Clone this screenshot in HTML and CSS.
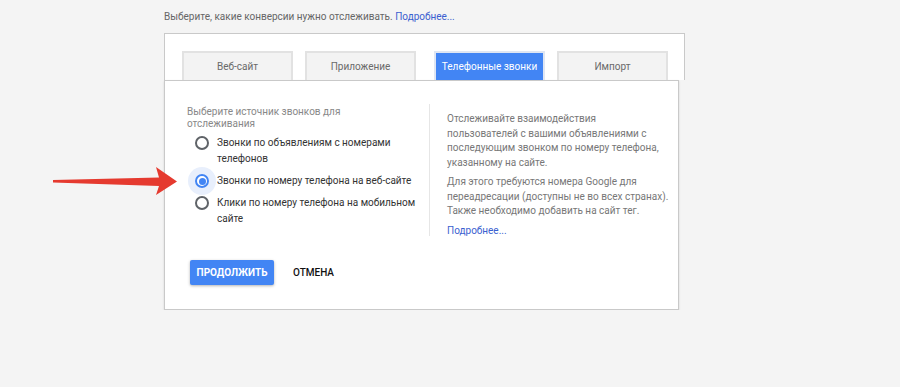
FILE: index.html
```html
<!DOCTYPE html>
<html lang="ru">
<head>
    <meta charset="UTF-8">
    <title>Конверсии</title>
    <link rel="stylesheet" href="styles.css">
</head>
<body>
    <div class="page">
        <p class="intro">Выберите, какие конверсии нужно отслеживать. <a href="#">Подробнее...</a></p>

        <div class="tabs-box">
            <div class="tab">Веб-сайт</div>
            <div class="tab">Приложение</div>
            <div class="tab active">Телефонные звонки</div>
            <div class="tab">Импорт</div>
        </div>

        <div class="panel">
            <div class="cols">
                <div class="left-col">
                    <div class="group-label">Выберите источник звонков для отслеживания</div>
                    <label class="radio-row">
                        <span class="radio"></span>
                        <span class="radio-text">Звонки по объявлениям с номерами телефонов</span>
                    </label>
                    <label class="radio-row">
                        <span class="radio checked"></span>
                        <span class="radio-text">Звонки по номеру телефона на веб-сайте</span>
                    </label>
                    <label class="radio-row">
                        <span class="radio"></span>
                        <span class="radio-text">Клики по номеру телефона на мобильном сайте</span>
                    </label>
                </div>
                <div class="right-col">
                    <p>Отслеживайте взаимодействия<br>пользователей с вашими объявлениями с последующим звонком по номеру телефона, указанному на сайте.</p>
                    <p>Для этого требуются номера Google для переадресации (доступны не во всех странах). Также необходимо добавить на сайт тег.</p>
                    <p><a href="#">Подробнее...</a></p>
                </div>
            </div>

            <div class="actions">
                <button class="btn-primary" type="button">Продолжить</button>
                <button class="btn-flat" type="button">Отмена</button>
            </div>
        </div>
    </div>

    <!-- annotation arrow drawn over the screenshot -->
    <svg class="arrow" width="900" height="387" viewBox="0 0 900 387">
        <polygon points="53,180 159,177.5 156,167 177,181.5 156,195 159,186 53,182.5" fill="#e53a2f"/>
    </svg>
</body>
</html>
```

FILE: styles.css
```css
* {
    box-sizing: border-box;
}
body {
    margin: 0;
    background: #f4f4f4;
    font-family: Roboto, "Noto Sans", sans-serif;
    font-size: 10px;
    color: #333;
}
a {
    color: #3b5fd0;
    text-decoration: none;
}
.page {
    padding-left: 164px;
}
.intro {
    margin: 0;
    padding-top: 9px;
    height: 33px;
    line-height: 15px;
    color: #666;
}
.tabs-box {
    width: 521px;
    height: 47px;
    border: 1px solid #c9c9c9;
    border-bottom: none;
    background: #fff;
    display: flex;
    align-items: flex-end;
    padding-left: 17px;
    gap: 12px;
}
.tab {
    width: 111px;
    height: 29px;
    border: 2px solid #e2e2e2;
    border-bottom: none;
    background: #f3f3f3;
    color: #6a6a6a;
    display: flex;
    align-items: center;
    justify-content: center;
}
.tab.active {
    margin-left: 6px;
    background: #4285f4;
    border-color: #dfe6f3;
    color: #fff;
}
.panel {
    width: 515px;
    height: 230px;
    border: 1px solid #c9c9c9;
    background: #fff;
    box-shadow: 0 1px 2px rgba(0, 0, 0, 0.12);
    padding: 23px 0 0 22px;
}
.cols {
    display: flex;
    height: 132px;
}
.left-col {
    width: 243px;
    padding-top: 2px;
    border-right: 1px solid #e6e6e6;
}
.group-label {
    width: 180px;
    line-height: 12px;
    color: #888;
    margin-bottom: 5px;
}
.radio-row {
    display: flex;
    align-items: flex-start;
    line-height: 16px;
    margin-bottom: 6px;
}
.radio {
    position: relative;
    flex: none;
    width: 14px;
    height: 14px;
    margin: 1px 8px 0 8px;
    border: 2px solid #5f6368;
    border-radius: 50%;
}
.radio.checked {
    border-color: #4285f4;
    box-shadow: 0 0 0 7px #e8effc;
}
.radio.checked::after {
    content: "";
    position: absolute;
    left: 1.5px;
    top: 1.5px;
    width: 7px;
    height: 7px;
    border-radius: 50%;
    background: #4285f4;
}
.radio-text {
    width: 200px;
}
.right-col {
    padding: 8px 0 0 17px;
    width: 244px;
    color: #777;
    line-height: 14.5px;
}
.right-col p {
    margin: 0 0 5px;
}
.actions {
    display: flex;
    align-items: center;
    margin-top: 24px;
    padding-left: 3px;
}
.btn-primary {
    width: 84px;
    height: 25px;
    border: none;
    border-radius: 2px;
    background: #4285f4;
    color: #fff;
    font-family: Roboto, sans-serif;
    font-size: 10px;
    font-weight: bold;
    text-transform: uppercase;
    box-shadow: 0 1px 3px rgba(0, 0, 0, 0.3);
    padding: 0;
}
.btn-flat {
    margin-left: 19px;
    border: none;
    background: none;
    padding: 0;
    color: #111;
    font-family: Roboto, sans-serif;
    font-size: 10px;
    font-weight: 500;
    text-transform: uppercase;
}
.arrow {
    position: absolute;
    left: 0;
    top: 0;
    pointer-events: none;
}
```
